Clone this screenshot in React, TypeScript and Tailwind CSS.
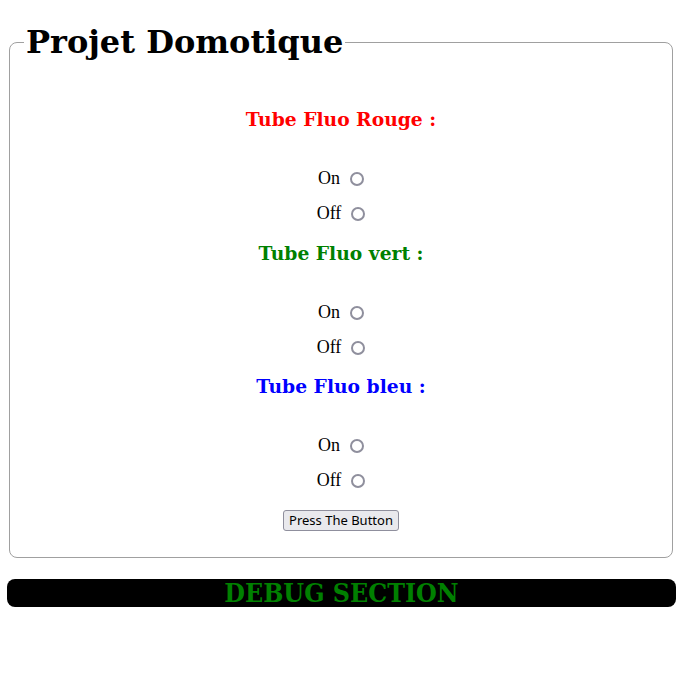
import { useState } from "react";

const tubes = [
  { name: "rouge", label: "Tube Fluo Rouge :", color: "text-[#ff0000]" },
  { name: "vert", label: "Tube Fluo vert :", color: "text-[#008000]" },
  { name: "bleu", label: "Tube Fluo bleu :", color: "text-[#0000ff]" },
];

function RadioRow({ name, value, label, checked, onChange }: { name: string; value: string; label: string; checked: boolean; onChange: () => void }) {
  return (
    <label className="flex h-[35px] items-center justify-center gap-[10px] text-[18px] text-black">
      <span>{label}</span>
      <input
        type="radio"
        name={name}
        value={value}
        checked={checked}
        onChange={onChange}
        className="m-0 mt-[1px] h-[14px] w-[14px] appearance-none rounded-full border-2 border-[#8f8f9d] bg-white checked:border-[4px] checked:border-[#0060df]"
      />
    </label>
  );
}

export default function App() {
  const [state, setState] = useState<Record<string, string>>({});

  return (
    <div className="min-h-[687px] bg-white pt-[27px] font-['Liberation_Serif',serif]">
      <fieldset className="ml-[9px] mr-[6px] rounded-[8px] border border-[#a0a0a0] px-[12px] pb-[26px]">
        <legend className="ml-[2px] px-[2px] font-['DejaVu_Serif',serif] text-[32px] leading-[30px] font-bold text-black">
          Projet Domotique
        </legend>

        <div className="flex flex-col items-center pt-[50px]">
          {tubes.map((t) => (
            <div key={t.name} className="flex w-full flex-col items-center">
              <h3 className={`h-[24px] font-['DejaVu_Serif',serif] text-[18.72px] leading-[24px] font-bold ${t.color}`}>
                {t.label}
              </h3>
              <div className="h-[30px]" />
              <RadioRow
                name={t.name}
                value="on"
                label="On"
                checked={state[t.name] === "on"}
                onChange={() => setState({ ...state, [t.name]: "on" })}
              />
              <RadioRow
                name={t.name}
                value="off"
                label="Off"
                checked={state[t.name] === "off"}
                onChange={() => setState({ ...state, [t.name]: "off" })}
              />
              <div className="h-[9.5px]" />
            </div>
          ))}

          <button
            type="button"
            className="mt-[2px] h-[21px] rounded-[3px] border border-[#8f8f9d] bg-[#e9e9ed] px-[5px] font-['Noto_Sans',sans-serif] text-[13px] leading-[19px] text-black hover:bg-[#d0d0d7]"
          >
            Press The Button
          </button>
        </div>
      </fieldset>

      <div className="mt-[21px] ml-[7px] mr-[3px] flex h-[28px] items-center justify-center rounded-[8px] bg-black">
        <h2 className="font-['DejaVu_Serif',serif] text-[26.5px] leading-[28px] font-bold text-[#008000] [font-stretch:condensed]">
          DEBUG SECTION
        </h2>
      </div>
    </div>
  );
}
